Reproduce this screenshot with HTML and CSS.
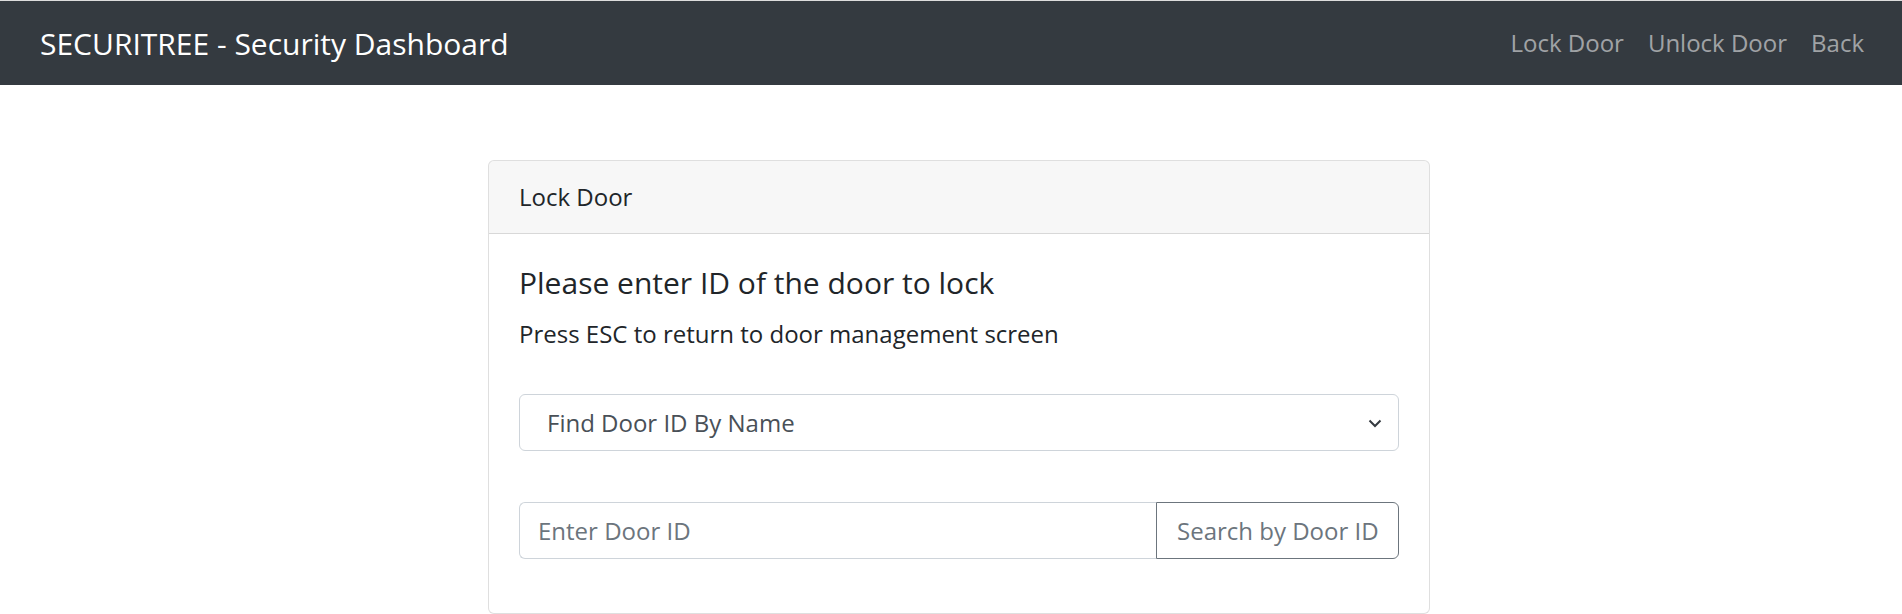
FILE: index.html
```html
<!DOCTYPE html>
<html lang="en">
<head>
<meta charset="utf-8">
<title>SECURITREE - Security Dashboard</title>
<link rel="stylesheet" href="styles.css">
</head>
<body>
<header class="navbar">
  <a class="brand" href="#">SECURITREE - Security Dashboard</a>
  <nav class="nav">
    <a class="nav-link" href="#">Lock Door</a>
    <a class="nav-link" href="#">Unlock Door</a>
    <a class="nav-link" href="#">Back</a>
  </nav>
</header>
<main class="main">
  <section class="card">
    <div class="card-header">Lock Door</div>
    <div class="card-body">
      <h5 class="card-title">Please enter ID of the door to lock</h5>
      <p class="card-text">Press ESC to return to door management screen</p>
      <div class="select">
        <span class="select-text">Find Door ID By Name</span>
        <svg class="chevron" width="14" height="10" viewBox="0 0 14 10"><path d="M1.5 2.5 L7 8 L12.5 2.5" fill="none" stroke="#343a40" stroke-width="2"/></svg>
      </div>
      <div class="input-group">
        <input class="input" type="text" placeholder="Enter Door ID">
        <button class="btn" type="button">Search by Door ID</button>
      </div>
    </div>
  </section>
</main>
</body>
</html>
```

FILE: styles.css
```css
* { box-sizing: border-box; }
html, body { margin: 0; padding: 0; }
body {
  font-family: "Open Sans", "Liberation Sans", sans-serif;
  font-size: 24px;
  line-height: 1.5;
  color: #212529;
  background: #fff;
  border-top: 1px solid #dcdcdc;
}
.navbar {
  display: flex;
  justify-content: space-between;
  align-items: center;
  background: #343a40;
  padding: 12px 26px 12px 40px;
}
.brand {
  color: #fff;
  text-decoration: none;
  font-size: 30px;
  line-height: 45px;
  padding: 7.5px 0;
}
.nav { display: flex; }
.nav-link {
  color: rgba(255,255,255,.55);
  text-decoration: none;
  padding: 12px 12px;
  line-height: 36px;
}
.main { padding-top: 75px; }
.card {
  margin-left: 488px;
  width: 942px;
  border: 1px solid rgba(0,0,0,.125);
  border-radius: 6px;
  background: #fff;
}
.card-header {
  background: rgba(0,0,0,.03);
  border-bottom: 1px solid rgba(0,0,0,.125);
  padding: 18px 30px;
  border-radius: 5px 5px 0 0;
}
.card-body { padding: 31px 30px 30px; }
.card-title {
  margin: 0 0 15px;
  font-size: 30px;
  font-weight: 500;
  line-height: 1.2;
}
.card-text { margin: 0 0 42px; }
.select {
  display: flex;
  justify-content: space-between;
  align-items: center;
  height: 57px;
  border: 1px solid #ced4da;
  border-radius: 6px;
  padding: 0 16px 0 27px;
  color: #495057;
  margin-bottom: 51px;
}
.chevron { display: block; }
.input-group {
  display: flex;
  height: 57px;
  margin-bottom: 24px;
}
.input {
  flex: 1;
  min-width: 0;
  font: inherit;
  color: #495057;
  border: 1px solid #ced4da;
  border-right: none;
  border-radius: 6px 0 0 6px;
  padding: 0 18px;
  outline: none;
}
.input::placeholder { color: #6c757d; }
.btn {
  font: inherit;
  color: #6c757d;
  background: #fff;
  border: 1px solid #6c757d;
  border-radius: 0 6px 6px 0;
  padding: 0 18px 0 20px;
  width: 243px;
  text-align: left;
}
```
